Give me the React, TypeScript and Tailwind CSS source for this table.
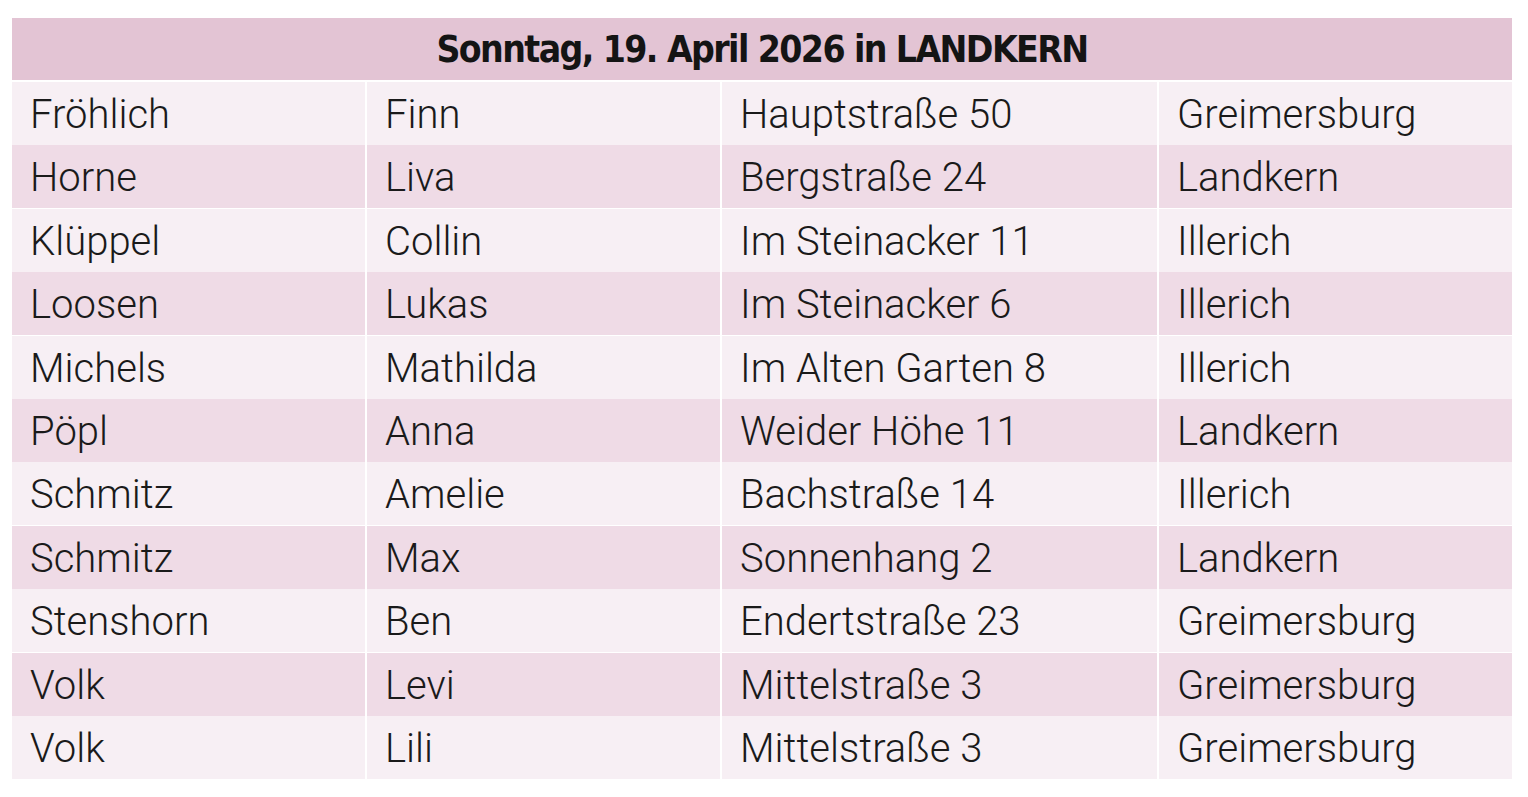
const rows: [string, string, string, string][] = [
  ['Fröhlich', 'Finn', 'Hauptstraße 50', 'Greimersburg'],
  ['Horne', 'Liva', 'Bergstraße 24', 'Landkern'],
  ['Klüppel', 'Collin', 'Im Steinacker 11', 'Illerich'],
  ['Loosen', 'Lukas', 'Im Steinacker 6', 'Illerich'],
  ['Michels', 'Mathilda', 'Im Alten Garten 8', 'Illerich'],
  ['Pöpl', 'Anna', 'Weider Höhe 11', 'Landkern'],
  ['Schmitz', 'Amelie', 'Bachstraße 14', 'Illerich'],
  ['Schmitz', 'Max', 'Sonnenhang 2', 'Landkern'],
  ['Stenshorn', 'Ben', 'Endertstraße 23', 'Greimersburg'],
  ['Volk', 'Levi', 'Mittelstraße 3', 'Greimersburg'],
  ['Volk', 'Lili', 'Mittelstraße 3', 'Greimersburg'],
];

export default function App() {
  return (
    <div className="w-[1528px] h-[797px] bg-white pt-[18px] pl-[12px]">
      <div className="w-[1500px] flex flex-col gap-[2px]">
        <div
          className="h-[62px] bg-[#e3c4d4] flex items-center justify-center pt-[2px] text-[#141414] text-[37px] font-bold tracking-[-1.6px]"
          style={{ fontFamily: '"Liberation Sans Narrow", "DejaVu Sans Condensed", sans-serif', fontStretch: 'condensed' }}
        >
          Sonntag, 19. April 2026 in LANDKERN
        </div>
        {rows.map((r, i) => (
          <div
            key={i}
            className="grid grid-cols-[353px_353px_435px_353px] gap-[2px] h-[61.4px]"
          >
            {r.map((c, j) => (
              <div
                key={j}
                className={`${i % 2 === 0 ? 'bg-[#f7eff4]' : 'bg-[#efdbe6]'} flex items-center pl-[18px] pt-[3px] text-[40px] text-[#1a1a1a]`}
                style={{ fontFamily: 'Roboto, "Liberation Sans", sans-serif', fontWeight: 300 }}
              >
                {c}
              </div>
            ))}
          </div>
        ))}
      </div>
    </div>
  );
}
